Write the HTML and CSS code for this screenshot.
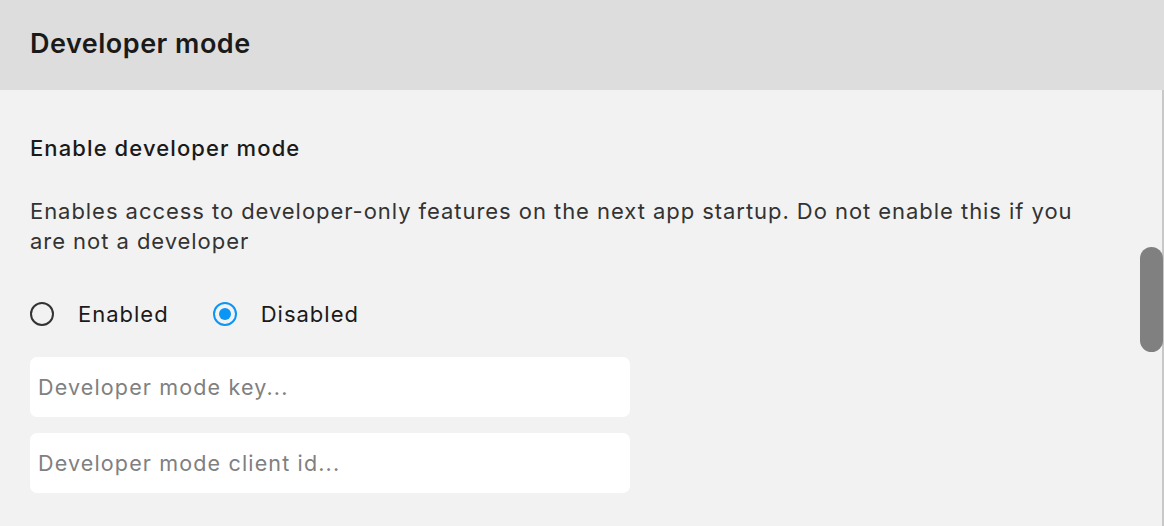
FILE: index.html
```html
<!DOCTYPE html>
<html>
<head>
<meta charset="utf-8">
<link rel="stylesheet" href="styles.css">
</head>
<body>
<div class="page">
  <header class="header"><h1 class="title">Developer mode</h1></header>
  <main class="content">
    <h2 class="subtitle">Enable developer mode</h2>
    <p class="desc">Enables access to developer-only features on the next app startup. Do not enable this if you are not a developer</p>
    <div class="radios">
      <label class="radio"><span class="circle"></span><span class="rlabel">Enabled</span></label>
      <label class="radio"><span class="circle checked"></span><span class="rlabel">Disabled</span></label>
    </div>
    <div class="field"><span class="placeholder">Developer mode key...</span></div>
    <div class="field"><span class="placeholder">Developer mode client id...</span></div>
  </main>
  <div class="track"></div>
  <div class="thumb"></div>
</div>
</body>
</html>
```
FILE: styles.css
```css
html, body { margin: 0; padding: 0; }
body {
  background: #f2f2f2;
  font-family: Inter, "Noto Sans", sans-serif;
  width: 1164px;
  height: 526px;
  overflow: hidden;
}
.page { position: relative; height: 526px; }
.header {
  height: 90px;
  background: #dddddd;
  display: flex;
  align-items: center;
  padding-left: 30px;
}
.title {
  margin: 0;
  font-size: 27px;
  font-weight: 600;
  letter-spacing: 0.5px;
  color: #1a1a1a;
  line-height: 30px;
  position: relative;
  top: -1px;
}
.content {
  padding: 0 30px;
  display: flex;
  flex-direction: column;
}
.subtitle {
  margin: 44px 0 0;
  font-size: 22px;
  font-weight: 500;
  letter-spacing: 1.1px;
  line-height: 28px;
  color: #1a1a1a;
}
.desc {
  margin: 34px 0 0;
  font-size: 22px;
  letter-spacing: 0.95px;
  line-height: 30px;
  color: #333333;
  width: 1075px;
}
.radios {
  margin-top: 43px;
  display: flex;
  align-items: center;
  height: 30px;
}
.radio {
  display: flex;
  align-items: center;
  margin-right: 44px;
}
.circle {
  border: 2px solid #333333;
  border-radius: 50%;
  box-sizing: border-box;
  width: 24px;
  height: 24px;
  display: flex;
  align-items: center;
  justify-content: center;
}
.circle.checked {
  border-color: #0b95f5;
}
.circle.checked::after {
  content: "";
  width: 12px;
  height: 12px;
  border-radius: 50%;
  background: #0b95f5;
}
.rlabel {
  margin-left: 24px;
  font-size: 22px;
  letter-spacing: 1px;
  color: #1a1a1a;
}
.field {
  margin-top: 28px;
  width: 600px;
  height: 60px;
  background: #ffffff;
  border-radius: 7px;
  display: flex;
  align-items: center;
  padding-left: 8px;
  box-sizing: border-box;
}
.field + .field { margin-top: 16px; }
.placeholder {
  font-size: 21.5px;
  letter-spacing: 1.15px;
  color: #808080;
}
.track {
  position: absolute;
  right: 0;
  top: 90px;
  bottom: 0;
  width: 2px;
  background: #c8c8c8;
}
.thumb {
  position: absolute;
  left: 1140px;
  top: 247px;
  width: 23px;
  height: 105px;
  border-radius: 12px;
  background: #808080;
}
```
